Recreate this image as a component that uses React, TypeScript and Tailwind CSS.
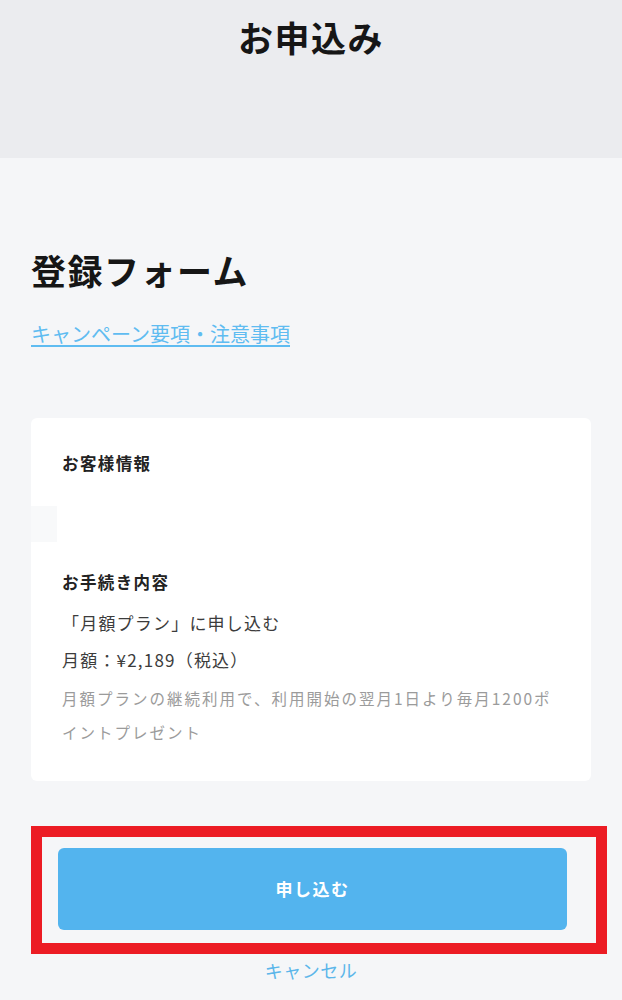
import * as React from "react";

const font = { fontFamily: '"Noto Sans CJK JP", "Noto Sans", sans-serif' };

function Header() {
  return (
    <header className="h-[158px] bg-[#ebecef] pt-[19px] text-center">
      <h1 className="text-[35px] leading-none font-bold tracking-[1.5px] text-[#161616]">お申込み</h1>
    </header>
  );
}

function OrderCard() {
  return (
    <section className="mt-[74px] rounded-md bg-white pt-[37px] pb-[32px] pl-[31px] pr-[24px]">
      <h2 className="text-[16.5px] leading-none font-bold tracking-[1.4px] text-[#222]">お客様情報</h2>
      <div className="-ml-[31px] mt-[34px] h-[36px] w-[26px] bg-[#f8f9fa]" />
      <h2 className="mt-[32px] text-[16.5px] leading-none font-bold tracking-[1.4px] text-[#222]">お手続き内容</h2>
      <div className="mt-[14px] text-[17px] leading-[37px] tracking-[1.2px] text-[#3c3c3c]">
        <p>「月額プラン」に申し込む</p>
        <p>月額：¥2,189（税込）</p>
      </div>
      <p className="mt-[3px] text-[15.5px] leading-[34px] tracking-[2px] text-[#9b9b9b]">
        月額プランの継続利用で、利用開始の翌月1日より毎月1200ポイントプレゼント
      </p>
    </section>
  );
}

export default function App() {
  return (
    <div className="min-h-[1000px] bg-[#f5f6f8]" style={font}>
      <Header />
      <main className="px-[31px] pt-[94px] pb-6">
        <h2 className="text-[35px] leading-none font-bold tracking-[1.5px] text-[#161616]">登録フォーム</h2>
        <a
          href="#"
          className="mt-[37px] block text-[20px] leading-none text-[#5fbcf1] underline underline-offset-[3px]"
        >
          キャンペーン要項・注意事項
        </a>
        <OrderCard />
        <div className="mt-[45px] w-[576px] border-[11px] border-[#ec1c24] pt-[11px] pb-[13px] pl-[16px] pr-[29px]">
          <button className="flex h-[82px] w-full items-center justify-center rounded-md bg-[#53b4ee] text-[17px] font-bold tracking-[1.5px] text-white">
            申し込む
          </button>
        </div>
        <div className="mt-[5px] text-center">
          <button className="text-[18px] leading-none tracking-[0.5px] text-[#5cb6ea]">キャンセル</button>
        </div>
      </main>
    </div>
  );
}
